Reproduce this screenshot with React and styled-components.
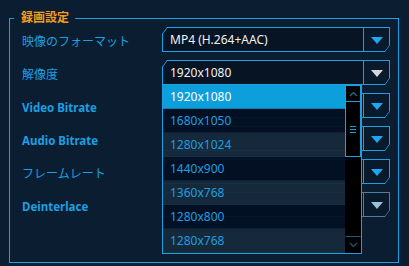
import React from "react";
import styled, { createGlobalStyle } from "styled-components";

const Global = createGlobalStyle`
  html, body {
    margin: 0;
    background: #0b1e31;
  }
  body {
    width: 409px;
    height: 266px;
    overflow: hidden;
    font-family: "Noto Sans", "Noto Sans CJK JP", sans-serif;
  }
`;

const Group = styled.div`
  position: relative;
  box-sizing: border-box;
  width: 390px;
  height: 245px;
  margin: 18px 0 0 9px;
  border: 1px solid #1ba1e2;
  padding: 8px 8px 0 12px;
  display: flex;
  flex-direction: column;
  gap: 8px;
`;

const Legend = styled.div`
  position: absolute;
  top: -11px;
  left: 4px;
  padding: 0 6px 0 7px;
  background: #0b1e31;
  color: #f39c1f;
  font-family: "Noto Sans CJK JP", sans-serif;
  font-weight: 700;
  font-size: 12px;
  line-height: 18px;
`;

const Row = styled.div`
  display: flex;
  align-items: center;
  height: 25px;
`;

const Label = styled.div`
  width: 140px;
  padding-top: 3px;
  color: #1e9fe0;
  font-size: ${(p) => (p.$bold ? "11.5px" : "12px")};
  font-weight: ${(p) => (p.$bold ? 700 : 400)};
  white-space: nowrap;
`;

const ComboWrap = styled.div`
  position: relative;
  width: 228px;
  height: 25px;
  z-index: ${(p) => (p.$open ? 5 : 1)};
`;

const ComboFrame = styled.div`
  box-sizing: border-box;
  height: 100%;
  padding: 1px;
  background: ${(p) => (p.$disabled ? "#4f7d9c" : "#1ba1e2")};
  clip-path: polygon(5px 0, 100% 0, 100% calc(100% - 7px), calc(100% - 5px) 100%, 0 100%, 0 7px);
`;

const ComboBody = styled.div`
  display: flex;
  height: 100%;
  background: #061424;
  clip-path: polygon(4.3px 0, 100% 0, 100% calc(100% - 6px), calc(100% - 4.3px) 100%, 0 100%, 0 6px);
`;

const Value = styled.div`
  flex: 1;
  display: flex;
  align-items: center;
  padding-left: 7px;
  color: #f2f2f2;
  font-size: 12px;
  white-space: nowrap;
`;

const ArrowCell = styled.div`
  width: 25px;
  display: flex;
  align-items: center;
  justify-content: center;
  border-left: 1px solid ${(p) => (p.$disabled ? "#4f7d9c" : "#1ba1e2")};
  background: #081a2c;
`;

const Arrow = styled.div`
  width: 0;
  height: 0;
  margin-top: 1px;
  border-left: 6px solid transparent;
  border-right: 6px solid transparent;
  border-top: 7px solid ${(p) => p.$color};
`;

const Dropdown = styled.div`
  position: absolute;
  top: calc(100% - 1px);
  left: 0;
  width: 200px;
  box-sizing: border-box;
  border: 1px solid #1ba1e2;
  display: flex;
`;

const Items = styled.div`
  flex: 1;
  display: flex;
  flex-direction: column;
`;

const Item = styled.div`
  height: 24px;
  display: flex;
  align-items: center;
  padding-left: 7px;
  font-size: 12px;
  color: ${(p) => (p.$selected ? "#ffffff" : "#1e9fe0")};
  background: ${(p) =>
    p.$selected ? "#0c9fdc" : p.$alt ? "rgba(22, 42, 60, 0.95)" : "rgba(3, 17, 36, 0.96)"};
  border-bottom: 1px solid rgba(30, 60, 90, 0.35);
  box-sizing: border-box;
`;

const Scroll = styled.div`
  width: 16px;
  background: #000;
  display: flex;
  flex-direction: column;
`;

const ScrollBtn = styled.div`
  box-sizing: border-box;
  height: 17px;
  display: flex;
  align-items: center;
  justify-content: center;
  border: 1px solid ${(p) => (p.$dim ? "transparent" : "#1ba1e2")};
  border-top-color: ${(p) => (p.$dim ? "#1b5a7e" : "#1ba1e2")};
`;

const Thumb = styled.div`
  box-sizing: border-box;
  height: 55px;
  border: 1px solid #1ba1e2;
  border-top: none;
  display: flex;
  flex-direction: column;
  align-items: center;
  justify-content: center;
  gap: 2px;
`;

const Grip = styled.div`
  width: 6px;
  height: 1px;
  background: #1ba1e2;
`;

const Track = styled.div`
  flex: 1;
`;

const Chevron = ({ up, color }) => (
  <svg width="9" height="6" viewBox="0 0 9 6">
    <polyline
      points={up ? "1,5 4.5,1.5 8,5" : "1,1 4.5,4.5 8,1"}
      fill="none"
      stroke={color}
      strokeWidth="1.2"
    />
  </svg>
);

const resolutions = [
  "1920x1080",
  "1680x1050",
  "1280x1024",
  "1440x900",
  "1360x768",
  "1280x800",
  "1280x768",
];

// rows whose value is hidden by the open list carry no value text
const rows = [
  { label: "映像のフォーマット", value: "MP4 (H.264+AAC)", arrow: "#1ba8f0" },
  { label: "解像度", value: "1920x1080", arrow: "#d8d8d8", open: true },
  { label: "Video Bitrate", bold: true, value: "", arrow: "#1ba8f0" },
  { label: "Audio Bitrate", bold: true, value: "", arrow: "#1ba8f0" },
  { label: "フレームレート", value: "", arrow: "#1ba8f0" },
  { label: "Deinterlace", bold: true, value: "", arrow: "#9cc0d8", disabled: true },
];

function Combo({ value, arrow, open, disabled }) {
  return (
    <ComboWrap $open={open}>
      <ComboFrame $disabled={disabled}>
        <ComboBody>
          <Value>{value}</Value>
          <ArrowCell $disabled={disabled}>
            <Arrow $color={arrow} />
          </ArrowCell>
        </ComboBody>
      </ComboFrame>
      {open && (
        <Dropdown>
          <Items>
            {resolutions.map((r, i) => (
              <Item key={r} $selected={i === 0} $alt={i % 2 === 0}>
                {r}
              </Item>
            ))}
          </Items>
          <Scroll>
            <ScrollBtn>
              <Chevron up color="#1f6f92" />
            </ScrollBtn>
            <Thumb>
              <Grip />
              <Grip />
              <Grip />
            </Thumb>
            <Track />
            <ScrollBtn $dim>
              <Chevron color="#1b5a7e" />
            </ScrollBtn>
          </Scroll>
        </Dropdown>
      )}
    </ComboWrap>
  );
}

export default function App() {
  return (
    <>
      <Global />
      <Group>
        <Legend>録画設定</Legend>
        {rows.map((r) => (
          <Row key={r.label}>
            <Label $bold={r.bold}>{r.label}</Label>
            <Combo {...r} />
          </Row>
        ))}
      </Group>
    </>
  );
}
